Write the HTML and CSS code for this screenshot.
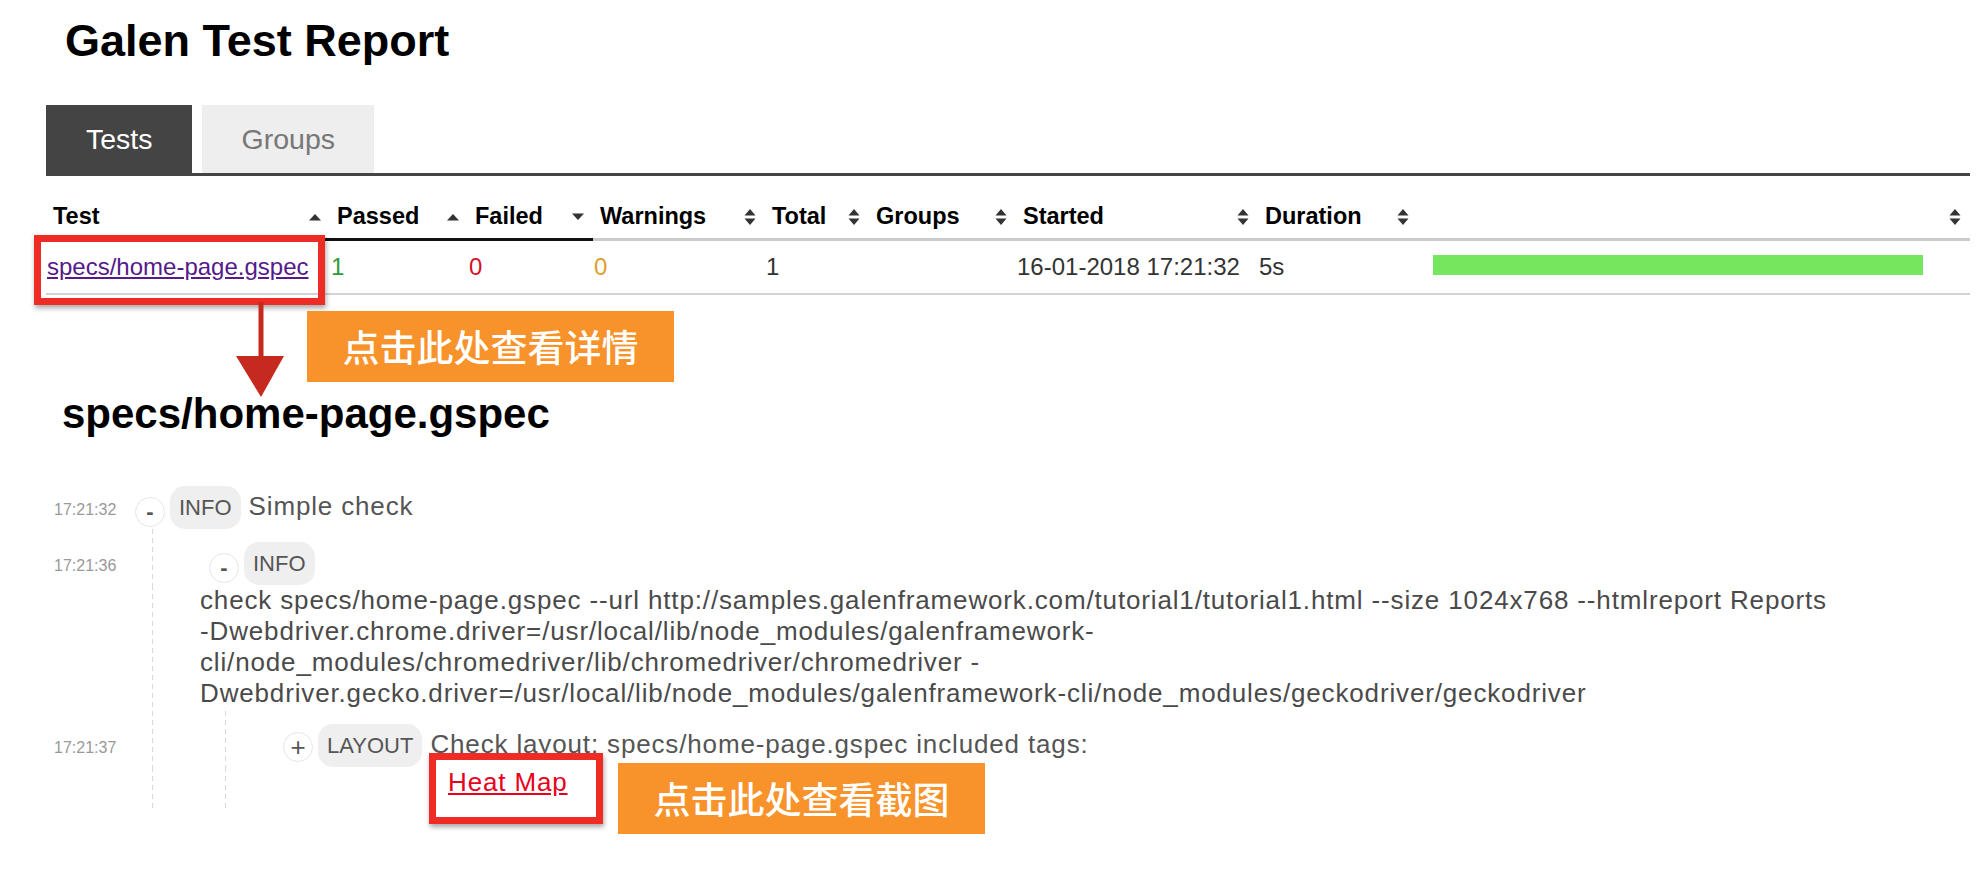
FILE: index.html
```html
<!DOCTYPE html>
<html lang="en">
<head>
<meta charset="utf-8">
<title>Galen Test Report</title>
<link rel="stylesheet" href="styles.css">
</head>
<body>
<div class="page">
  <h1 class="title">Galen Test Report</h1>

  <div class="tabs">
    <div class="tab active">Tests</div>
    <div class="tab">Groups</div>
  </div>

  <table class="tests">
    <colgroup>
      <col class="c-test"><col class="c-passed"><col class="c-failed"><col class="c-warn"><col class="c-total"><col class="c-groups"><col class="c-started"><col class="c-duration"><col class="c-bar">
    </colgroup>
    <thead>
      <tr>
        <th class="sorted"><div class="th-in"><span>Test</span><svg class="sort" width="14" height="8" viewBox="0 0 14 8"><path d="M1 7.5 L7 1 L13 7.5 Z"/></svg></div></th>
        <th class="sorted"><div class="th-in"><span>Passed</span><svg class="sort" width="14" height="8" viewBox="0 0 14 8"><path d="M1 7.5 L7 1 L13 7.5 Z"/></svg></div></th>
        <th class="sorted"><div class="th-in"><span>Failed</span><svg class="sort" width="14" height="8" viewBox="0 0 14 8"><path d="M1 0.5 L13 0.5 L7 7 Z"/></svg></div></th>
        <th><div class="th-in"><span>Warnings</span><svg class="sort" width="14" height="18" viewBox="0 0 14 18"><path d="M1.5 7.5 L7 1 L12.5 7.5 Z M1.5 10.5 L12.5 10.5 L7 17 Z"/></svg></div></th>
        <th><div class="th-in"><span>Total</span><svg class="sort" width="14" height="18" viewBox="0 0 14 18"><path d="M1.5 7.5 L7 1 L12.5 7.5 Z M1.5 10.5 L12.5 10.5 L7 17 Z"/></svg></div></th>
        <th><div class="th-in"><span>Groups</span><svg class="sort" width="14" height="18" viewBox="0 0 14 18"><path d="M1.5 7.5 L7 1 L12.5 7.5 Z M1.5 10.5 L12.5 10.5 L7 17 Z"/></svg></div></th>
        <th><div class="th-in"><span>Started</span><svg class="sort" width="14" height="18" viewBox="0 0 14 18"><path d="M1.5 7.5 L7 1 L12.5 7.5 Z M1.5 10.5 L12.5 10.5 L7 17 Z"/></svg></div></th>
        <th><div class="th-in"><span>Duration</span><svg class="sort" width="14" height="18" viewBox="0 0 14 18"><path d="M1.5 7.5 L7 1 L12.5 7.5 Z M1.5 10.5 L12.5 10.5 L7 17 Z"/></svg></div></th>
        <th><div class="th-in"><span></span><svg class="sort" width="14" height="18" viewBox="0 0 14 18"><path d="M1.5 7.5 L7 1 L12.5 7.5 Z M1.5 10.5 L12.5 10.5 L7 17 Z"/></svg></div></th>
      </tr>
    </thead>
    <tbody>
      <tr>
        <td><a class="test-link" href="#">specs/home-page.gspec</a></td>
        <td class="passed">1</td>
        <td class="failed">0</td>
        <td class="warn">0</td>
        <td>1</td>
        <td></td>
        <td>16-01-2018 17:21:32</td>
        <td>5s</td>
        <td><div class="bar"></div></td>
      </tr>
    </tbody>
  </table>

  <h2 class="spec-title">specs/home-page.gspec</h2>

  <div class="log">
    <div class="time">17:21:32</div>
    <div class="node">
      <span class="toggle">-</span><span class="badge">INFO</span><span class="msg">Simple check</span>
    </div>

    <div class="time">17:21:36</div>
    <div class="node g1 lvl2">
      <span class="toggle">-</span><span class="badge">INFO</span>
    </div>
    <div class="details g1">check specs/home-page.gspec --url http://samples.galenframework.com/tutorial1/tutorial1.html --size 1024x768 --htmlreport Reports<br>-Dwebdriver.chrome.driver=/usr/local/lib/node_modules/galenframework-<br>cli/node_modules/chromedriver/lib/chromedriver/chromedriver -<br>Dwebdriver.gecko.driver=/usr/local/lib/node_modules/galenframework-cli/node_modules/geckodriver/geckodriver</div>

    <div class="time">17:21:37</div>
    <div class="node g2 lvl3">
      <span class="toggle plus">+</span><span class="badge">LAYOUT</span><span class="msg">Check layout: specs/home-page.gspec included tags:</span>
    </div>
    <div class="attach g2"><a class="heat-link" href="#">Heat Map</a></div>
  </div>

  <div class="annot red-box box-test"></div>
  <svg class="annot arrow" width="60" height="100" viewBox="0 0 60 100">
    <rect x="28.5" y="0" width="5" height="58" fill="#c62a1f"/>
    <path d="M6 54 L54 54 L31 95 Z" fill="#c62a1f"/>
  </svg>
  <div class="annot callout callout-details">点击此处查看详情</div>
  <div class="annot red-box box-heat"></div>
  <div class="annot callout callout-shot">点击此处查看截图</div>
</div>
</body>
</html>
```

FILE: styles.css
```css
* { box-sizing: border-box; }

html, body {
  margin: 0;
  padding: 0;
  background: #fff;
}

body {
  font-family: "Liberation Sans", Arial, "Noto Sans CJK SC", sans-serif;
  color: #333;
}

.page {
  position: relative;
  width: 1982px;
  min-height: 870px;
  padding-top: 16px;
}

.title {
  margin: 0 0 0 65px;
  font-size: 45px;
  line-height: 50px;
  font-weight: 700;
  color: #000;
}

/* Tabs */
.tabs {
  display: flex;
  gap: 10px;
  margin: 39px 12px 0 46px;
  border-bottom: 3px solid #444;
}

.tab {
  padding: 18px 39px 18px 40px;
  font-size: 28.5px;
  line-height: 32px;
  background: #eee;
  color: #777;
}

.tab.active {
  background: #444;
  color: #fff;
}

/* Tests table */
.tests {
  margin-left: 46px;
  width: 1924px;
  border-collapse: separate;
  border-spacing: 0;
  table-layout: fixed;
}

.c-test { width: 284px; }
.c-passed { width: 138px; }
.c-failed { width: 125px; }
.c-warn { width: 172px; }
.c-total { width: 104px; }
.c-groups { width: 147px; }
.c-started { width: 242px; }
.c-duration { width: 160px; }
.c-bar { width: 552px; }

.tests th {
  padding: 27px 8px 8px 7px;
  font-size: 23.5px;
  line-height: 27px;
  font-weight: 700;
  color: #000;
  text-align: left;
  border-bottom: 3px solid #cbcbcb;
}

.tests th.sorted {
  border-bottom-color: #111;
}

.th-in {
  display: flex;
  align-items: center;
  justify-content: space-between;
  white-space: nowrap;
}

.sort {
  flex: none;
  fill: #333;
}

.tests td {
  padding: 12px 0 12px 1px;
  font-size: 24px;
  line-height: 28px;
  color: #333;
  border-bottom: 2px solid #d4d4d4;
  vertical-align: top;
  white-space: nowrap;
}

.test-link {
  color: #551a8b;
  text-decoration: underline;
}

.tests td.passed { color: #2e9a3e; }
.tests td.failed { color: #d4102b; }
.tests td.warn { color: #dba12c; }

.bar {
  width: 490px;
  height: 20px;
  margin: 2px 0 0 14px;
  background: #76e65f;
}

/* Spec section */
.spec-title {
  margin: 95px 0 0 62px;
  font-size: 42px;
  line-height: 48px;
  font-weight: 700;
  color: #000;
}

.log {
  display: grid;
  grid-template-columns: 81px 1fr;
  align-items: baseline;
  margin: 48px 0 0 54px;
}

.time {
  grid-column: 1;
  font-size: 16px;
  line-height: 20px;
  color: #999;
}

.node,
.details,
.attach {
  grid-column: 2;
}

.node {
  display: flex;
  align-items: baseline;
}

.toggle {
  flex: none;
  align-self: flex-end;
  display: flex;
  align-items: center;
  justify-content: center;
  width: 30px;
  height: 30px;
  margin: 0 5px 2px 0;
  border: 1px solid #e6e6e6;
  border-radius: 50%;
  background: #fff;
  font-size: 22px;
  font-weight: 700;
  color: #555;
}

.toggle.plus {
  font-size: 26px;
  font-weight: 400;
  margin-bottom: 5px;
}

.badge {
  padding: 9px;
  font-size: 22px;
  line-height: 25px;
  background: #efefef;
  border-radius: 15px;
  color: #555;
}

.msg {
  margin-left: 8px;
  font-size: 26px;
  line-height: 30px;
  letter-spacing: 0.85px;
  color: #555;
  white-space: nowrap;
}

.lvl2 { padding: 13px 0 0 74px; }
.lvl3 { padding: 13px 0 0 148px; }

.details {
  padding: 0 0 2px 65px;
  font-size: 26px;
  line-height: 31px;
  letter-spacing: 0.85px;
  color: #4a4a4a;
  white-space: nowrap;
}

.attach {
  padding: 0 0 14px 313px;
  font-size: 26px;
  line-height: 30px;
  letter-spacing: 0.85px;
}

.heat-link {
  color: #e8001c;
  text-decoration: underline;
}

/* dashed tree guides */
.g1 {
  background: repeating-linear-gradient(#d9d9d9 0 5px, transparent 5px 9px) 17px 0 / 1px 100% no-repeat;
}

.g2 {
  background:
    repeating-linear-gradient(#d9d9d9 0 5px, transparent 5px 9px) 17px 0 / 1px 100% no-repeat,
    repeating-linear-gradient(#d9d9d9 0 5px, transparent 5px 9px) 90px 0 / 1px 100% no-repeat;
}

/* Annotation overlays */
.annot {
  position: absolute;
}

.red-box {
  border: 7px solid #ee2b24;
  box-shadow: 1px 3px 5px rgba(0, 0, 0, 0.35);
}

.box-test {
  left: 34px;
  top: 235px;
  width: 291px;
  height: 70px;
}

.box-heat {
  left: 429px;
  top: 753px;
  width: 174px;
  height: 71px;
}

.arrow {
  left: 230px;
  top: 302px;
}

.callout {
  width: 367px;
  height: 71px;
  background: #f8922a;
  color: #fff;
  font-family: "Noto Sans CJK SC", sans-serif;
  font-size: 37px;
  font-weight: 500;
  line-height: 71px;
  text-align: center;
  white-space: nowrap;
}

.callout-details {
  left: 307px;
  top: 311px;
}

.callout-shot {
  left: 618px;
  top: 763px;
}
```
